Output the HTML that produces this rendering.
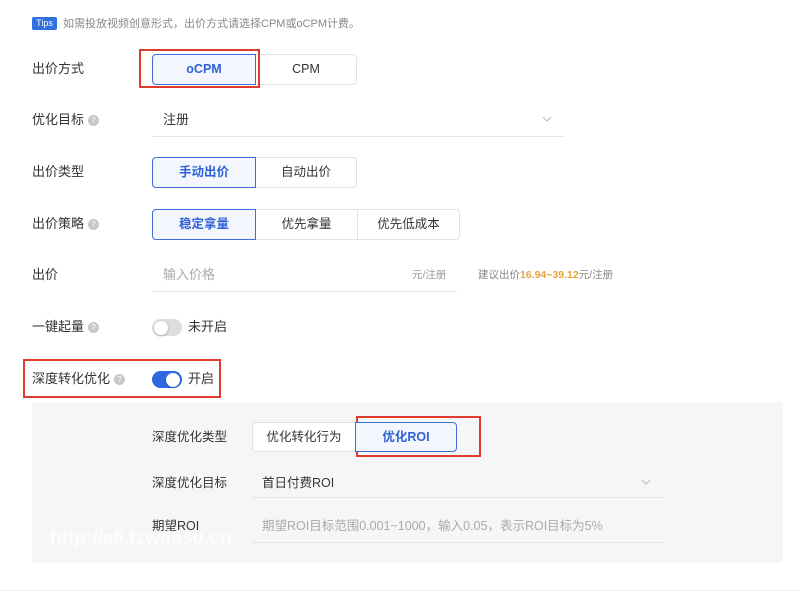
<!DOCTYPE html>
<html><head><meta charset="utf-8"><style>
*{margin:0;padding:0;box-sizing:border-box}
body{width:800px;height:597px;background:#fff;position:relative;overflow:hidden;font-family:"Liberation Sans","Noto Sans CJK SC",sans-serif;color:#333;font-size:13px}
.a{position:absolute;white-space:nowrap}
.lab{position:absolute;left:32px;font-size:13px;color:#333;line-height:16px}
.q{display:inline-block;width:11px;height:11px;border-radius:50%;background:#c8c8cc;color:#fff;font-size:8px;line-height:11px;text-align:center;vertical-align:1px;margin-left:4px}
.btn{position:absolute;height:31px;border:1px solid #dfe1e6;background:#fff;text-align:center;line-height:29px;font-size:12.5px;color:#333}
.on{border-color:#3d6fd8;background:#f3f6fc;color:#2f62d6;font-weight:bold;z-index:2}
.ul{position:absolute;height:1px;background:#e4e6ea}
.red{position:absolute;border:2px solid #e03b2f}
.tg{position:absolute;width:30px;height:17px;border-radius:9px}
.tg i{position:absolute;top:1.5px;width:14px;height:14px;border-radius:50%;background:#fff;box-shadow:0 1px 2px rgba(0,0,0,.25)}
</style></head><body>
<div class="a" style="left:32px;top:17px;width:25px;height:13px;background:#2f6fe0;color:#fff;font-size:9px;line-height:13px;text-align:center;border-radius:2px">Tips</div>
<div class="a" style="left:63px;top:17px;font-size:11px;color:#888;line-height:14px">如需投放视频创意形式，出价方式请选择CPM或oCPM计费。</div>

<div class="lab" style="top:61px">出价方式</div>
<div class="btn on" style="left:152px;top:54px;width:104px;border-radius:4px 0 0 4px">oCPM</div>
<div class="btn" style="left:255px;top:54px;width:102px;border-radius:0 4px 4px 0">CPM</div>
<div class="red" style="left:139px;top:49px;width:121px;height:39px"></div>

<div class="lab" style="top:112px">优化目标<span class="q">?</span></div>
<div class="a" style="left:163px;top:112px;line-height:16px">注册</div>
<svg class="a" style="left:542px;top:116px" width="10" height="6"><path d="M1 1L5 5L9 1" fill="none" stroke="#bbb" stroke-width="1"/></svg>
<div class="ul" style="left:152px;top:136px;width:413px"></div>

<div class="lab" style="top:164px">出价类型</div>
<div class="btn on" style="left:152px;top:157px;width:104px;border-radius:4px 0 0 4px">手动出价</div>
<div class="btn" style="left:255px;top:157px;width:102px;border-radius:0 4px 4px 0">自动出价</div>

<div class="lab" style="top:216px">出价策略<span class="q">?</span></div>
<div class="btn on" style="left:152px;top:209px;width:104px;border-radius:4px 0 0 4px">稳定拿量</div>
<div class="btn" style="left:255px;top:209px;width:103px">优先拿量</div>
<div class="btn" style="left:357px;top:209px;width:103px;border-radius:0 4px 4px 0">优先低成本</div>

<div class="lab" style="top:267px">出价</div>
<div class="a" style="left:163px;top:267px;color:#aaa;line-height:16px">输入价格</div>
<div class="a" style="left:412px;top:268px;color:#999;font-size:10.5px;line-height:14px">元/注册</div>
<div class="ul" style="left:152px;top:291px;width:305px"></div>
<div class="a" style="left:478px;top:268px;color:#888;font-size:10.5px;line-height:14px">建议出价<b style="color:#e8a23a">16.94~39.12</b>元/注册</div>

<div class="lab" style="top:319px">一键起量<span class="q">?</span></div>
<div class="tg" style="left:152px;top:319px;background:#dcdde1"><i style="left:2px"></i></div>
<div class="a" style="left:188px;top:319px;line-height:16px">未开启</div>

<div class="lab" style="top:371px">深度转化优化<span class="q">?</span></div>
<div class="tg" style="left:152px;top:371px;background:#2f68e0"><i style="left:14px"></i></div>
<div class="a" style="left:188px;top:371px;line-height:16px">开启</div>
<div class="red" style="left:23px;top:359px;width:198px;height:39px"></div>

<div class="a" style="left:32px;top:402px;width:751px;height:161px;background:#f5f6f8;border-radius:4px"></div>
<div class="a" style="left:152px;top:429px;line-height:16px;font-size:12.5px">深度优化类型</div>
<div class="btn" style="left:252px;top:422px;width:104px;height:30px;line-height:28px;border-radius:4px 0 0 4px">优化转化行为</div>
<div class="btn on" style="left:355px;top:422px;width:102px;height:30px;line-height:28px;border-radius:0 4px 4px 0">优化ROI</div>
<div class="red" style="left:356px;top:416px;width:125px;height:41px"></div>

<div class="a" style="left:152px;top:475px;line-height:16px;font-size:12.5px">深度优化目标</div>
<div class="a" style="left:262px;top:475px;line-height:16px;font-size:12.5px">首日付费ROI</div>
<svg class="a" style="left:641px;top:479px" width="10" height="6"><path d="M1 1L5 5L9 1" fill="none" stroke="#bbb" stroke-width="1"/></svg>
<div class="ul" style="left:252px;top:497px;width:412px;background:#e2e4e8"></div>

<div class="a" style="left:152px;top:518px;line-height:16px;font-size:12.5px">期望ROI</div>
<div class="a" style="left:262px;top:518px;line-height:16px;font-size:12.5px;color:#aaa">期望ROI目标范围0.001~1000，输入0.05，表示ROI目标为5%</div>
<div class="ul" style="left:252px;top:542px;width:412px;background:#e2e4e8"></div>
<div class="a" style="left:50px;top:528px;font-size:19px;font-weight:bold;color:rgba(255,255,255,.75);line-height:22px">http://a6.tzwdasu.cn</div>

<div class="ul" style="left:0;top:590px;width:800px;background:#ececee"></div>
</body></html>
